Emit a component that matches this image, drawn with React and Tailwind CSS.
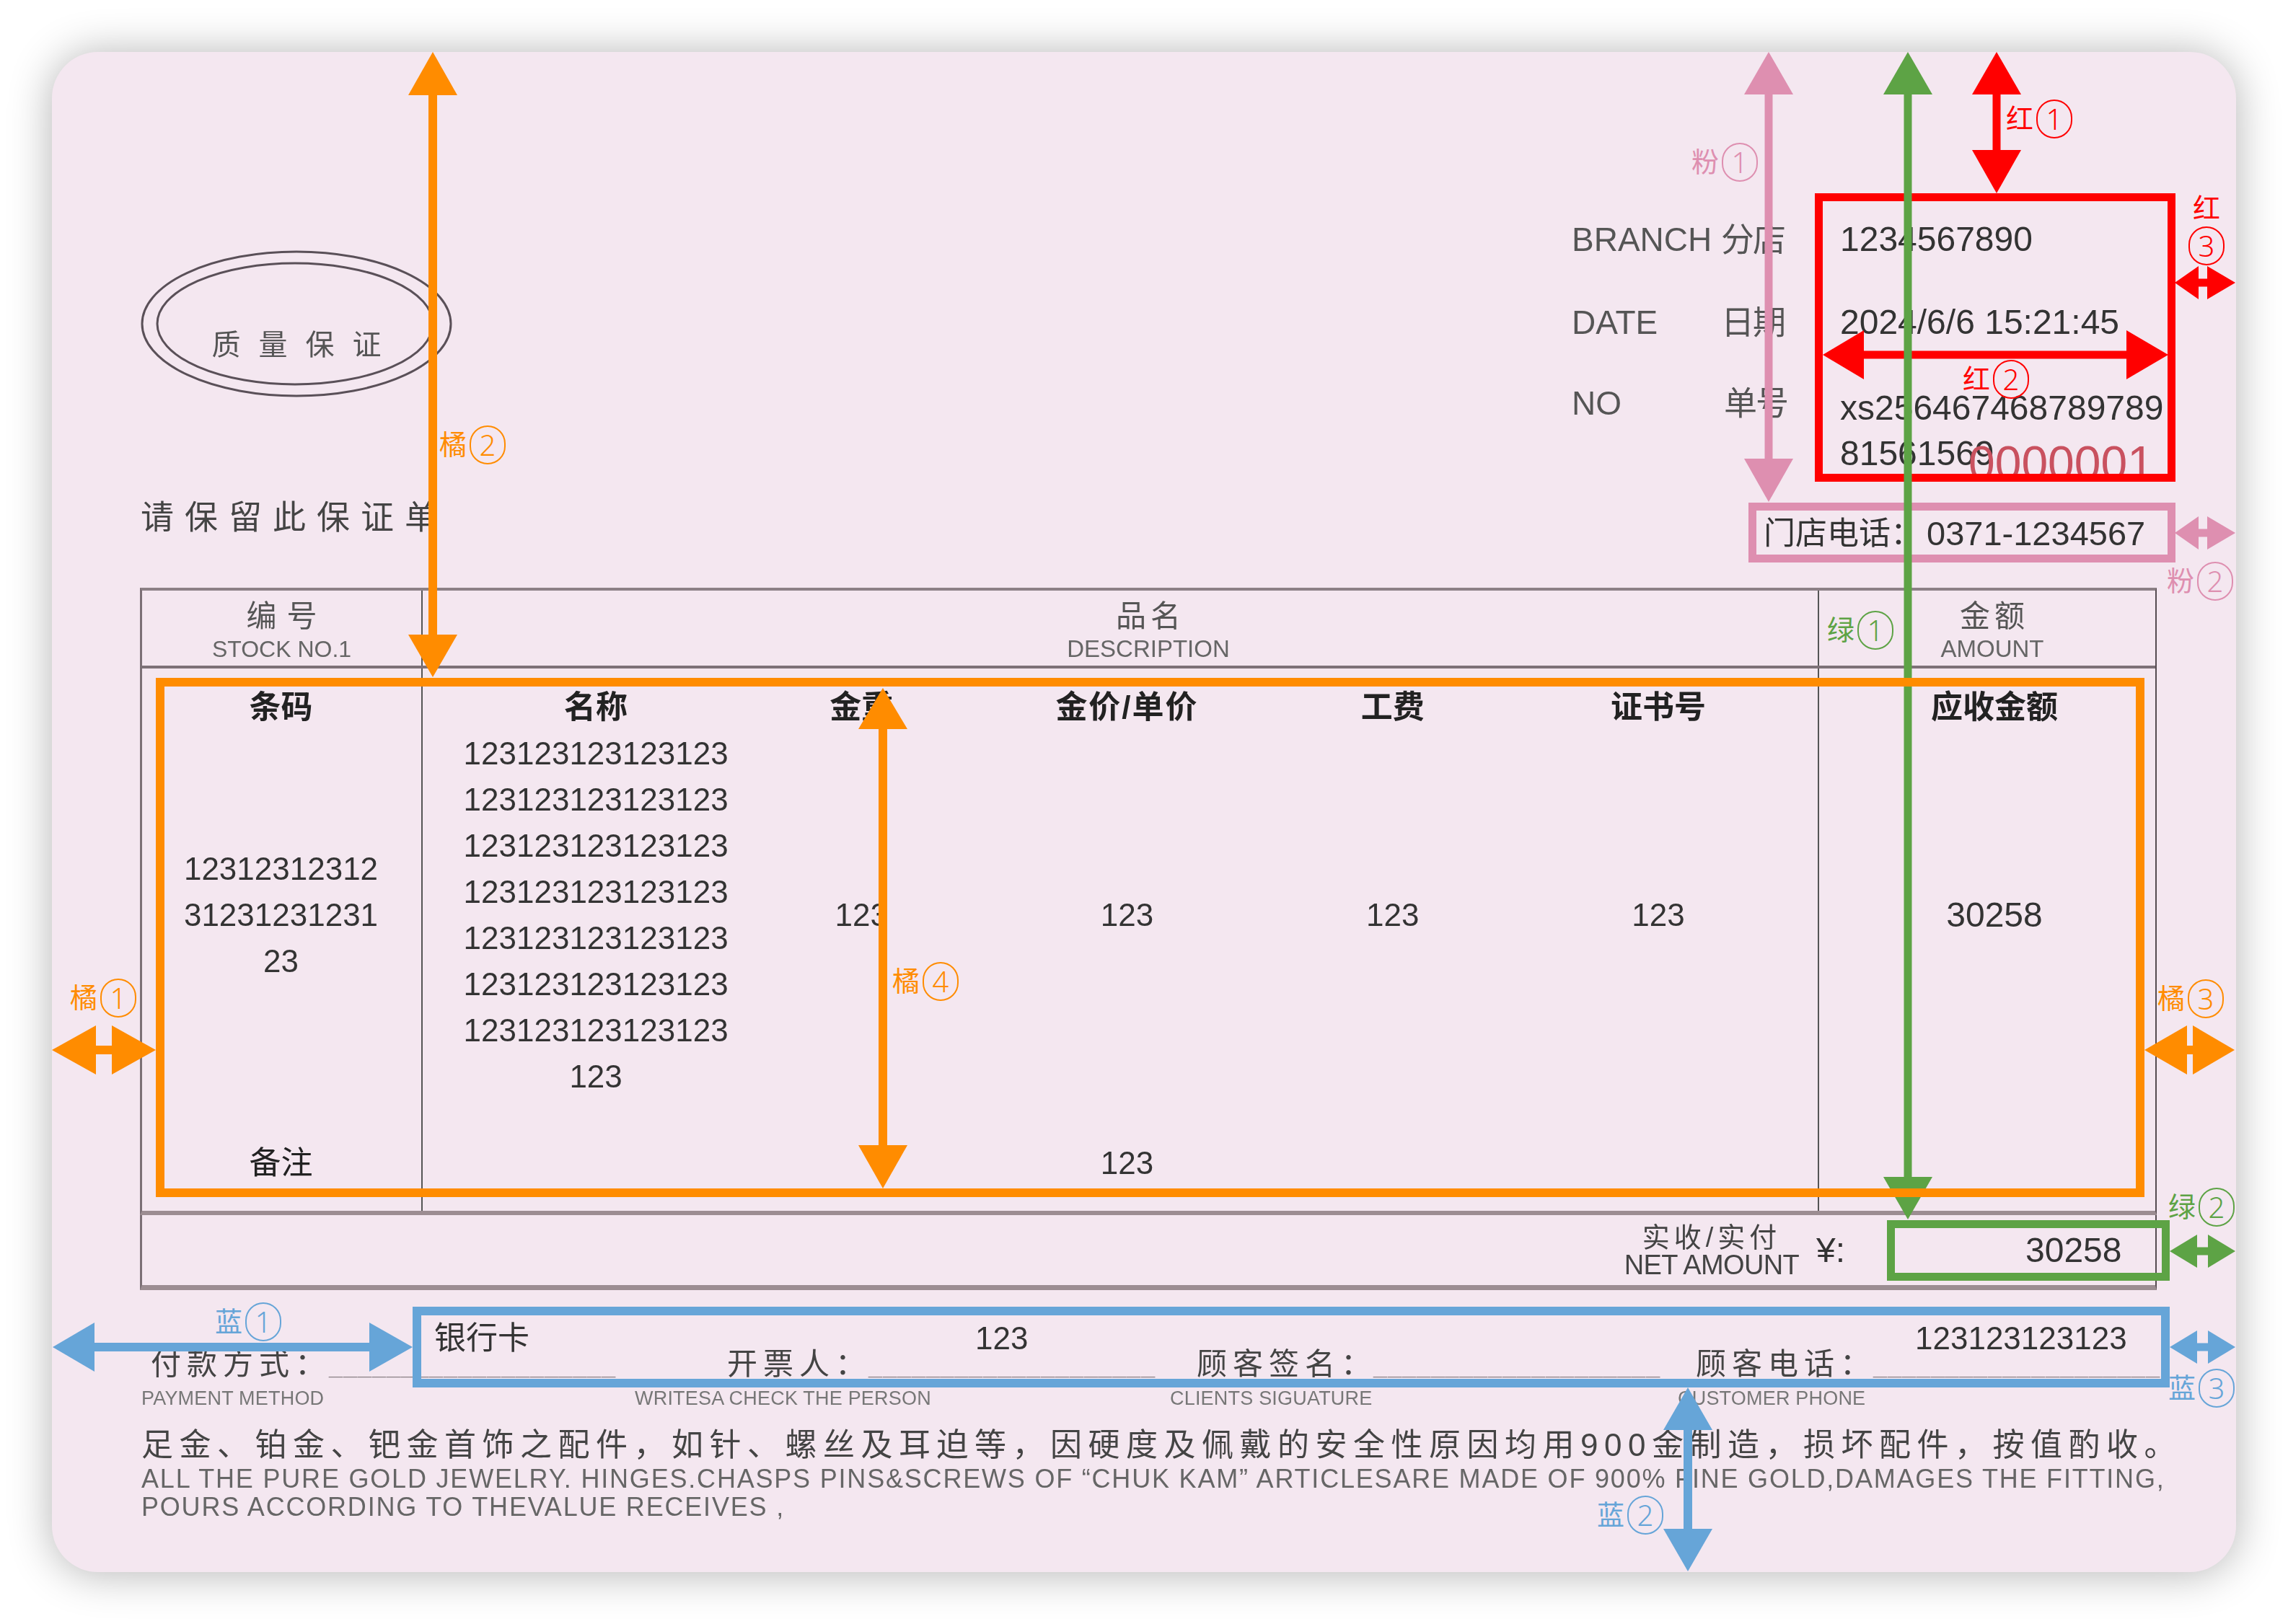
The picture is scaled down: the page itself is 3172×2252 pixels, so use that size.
import React from 'react';

const ORANGE = '#ff8c00';
const RED = '#ff0000';
const PINK = '#de8fb0';
const GREEN = '#5da345';
const BLUE = '#66a5d8';

const names = Array(7).fill('123123123123123');
const underscores = '____________________';

// up/down arrow, heads are filled triangles
const VArrow = ({ x, y1, y2, base1, base2, half = 34, w = 11, color }) => (
  <g fill={color}>
    <rect x={x - w / 2} y={base1} width={w} height={base2 - base1} />
    <polygon points={`${x},${y1} ${x - half},${base1} ${x + half},${base1}`} />
    <polygon points={`${x},${y2} ${x - half},${base2} ${x + half},${base2}`} />
  </g>
);

const HArrow = ({ y, x1, x2, base1, base2, half = 34, w = 11, color }) => (
  <g fill={color}>
    <rect x={base1} y={y - w / 2} width={base2 - base1} height={w} />
    <polygon points={`${x1},${y} ${base1},${y - half} ${base1},${y + half}`} />
    <polygon points={`${x2},${y} ${base2},${y - half} ${base2},${y + half}`} />
  </g>
);

const Box = ({ x1, y1, x2, y2, w, color }) => (
  <rect x={x1 + w / 2} y={y1 + w / 2} width={x2 - x1 - w} height={y2 - y1 - w} fill="none" stroke={color} strokeWidth={w} />
);

const Tag = ({ char, num, className }) => (
  <div className={`absolute flex items-center gap-[4px] h-[54px] text-[38px] leading-none ${className}`}>
    <span>{char}</span>
    <span className="flex items-center justify-center w-[50px] h-[54px] rounded-full border-[2.5px] border-current text-[40px] font-light [font-family:'Noto_Sans',sans-serif]">{num}</span>
  </div>
);

const Row = ({ children, className = '' }) => (
  <div className={`grid grid-cols-5 text-center ${className}`}>{children}</div>
);

const Blank = ({ className }) => (
  <span className={`pt-[2px] text-[34px] font-bold tracking-[1px] text-[#8a8086] ${className}`}>{underscores}</span>
);

const App = () => {
  return (
    <div className="relative w-[3172px] h-[2252px] bg-white p-[72px] overflow-hidden [font-family:'Liberation_Sans','Noto_Sans_CJK_SC',sans-serif] text-[#333]">
      <div className="w-[3028px] h-[2108px] rounded-[64px] bg-[#f4e7f0] shadow-[0_2px_60px_rgba(0,0,0,0.3)] overflow-hidden">
        <div className="blur-[0.7px]">
          {/* top block */}
          <div className="flex justify-between h-[743px] pl-[123px] pr-[84px]">
            <div className="pt-[275px]">
              <div className="relative w-[432px] h-[205px]">
                <svg width="432" height="205" viewBox="0 0 432 205" fill="none" stroke="#5a5058" strokeWidth="3">
                  <ellipse cx="216" cy="102" rx="214" ry="100" />
                  <ellipse cx="214" cy="102" rx="191" ry="84" />
                </svg>
                <div className="absolute inset-0 flex items-center justify-center pt-[56px] pl-[25px] text-[40px] tracking-[25px] text-[#555]">质量保证</div>
              </div>
              <div className="mt-[135px] text-[46px] leading-[60px] tracking-[15px] text-[#444] whitespace-nowrap">请保留此保证单</div>
            </div>

            <div className="relative w-[837px] pt-[230px]">
              <div className="grid grid-cols-[207px_165px_1fr] text-[46px] leading-[60px] text-[#555]">
                <div className="h-[115px]">BRANCH</div>
                <div className="tracking-[-2px]">分店</div>
                <div className="text-[48px] text-[#333]">1234567890</div>
                <div className="h-[117px]">DATE</div>
                <div className="tracking-[-2px]">日期</div>
                <div className="text-[48px] text-[#333] whitespace-nowrap">2024/6/6 15:21:45</div>
                <div className="leading-[50px]">NO</div>
                <div className="leading-[50px] pl-[4px] tracking-[-2px]">单号</div>
                <div className="text-[48px] text-[#333] leading-[63px]">
                  <div className="whitespace-nowrap">xs256467468789789</div>
                  <div>81561569</div>
                </div>
              </div>
              <div className="absolute left-[550px] top-[540px] text-[66px] leading-[60px] text-[#c9515f]">0000001</div>
              <div className="flex mt-[50px] pl-[266px] text-[47px] leading-[60px] text-[#333]">
                <span className="w-[226px] text-[44px]">门店电话：</span>
                <span className="whitespace-nowrap">0371-1234567</span>
              </div>
            </div>
          </div>

          {/* table */}
          <div className="ml-[122px] w-[2796px] border-t-[4px] border-l-[3px] border-r-[2px] border-b-[6px] border-t-[#8c8086] border-l-[#7b6f75] border-r-[#554b50] border-b-[#9c8d92]">
            <div className="grid grid-cols-[389px_1936px_1fr] h-[108px] border-b-[4px] border-[#7d7177] text-[#555]">
              <div className="flex flex-col items-center pt-[14px] border-r-2 border-[#555]">
                <div className="text-[42px] leading-[44px] tracking-[14px] pl-[14px]">编号</div>
                <div className="mt-[5px] text-[32px] leading-[36px] text-[#666]">STOCK NO.1</div>
              </div>
              <div className="flex flex-col items-center pt-[14px] pl-[78px] border-r-2 border-[#555]">
                <div className="text-[42px] leading-[44px] tracking-[6px] pl-[6px]">品名</div>
                <div className="mt-[5px] text-[33px] leading-[36px] text-[#666]">DESCRIPTION</div>
              </div>
              <div className="flex flex-col items-center pt-[14px] pl-[14px]">
                <div className="text-[42px] leading-[44px] tracking-[6px] pl-[6px]">金额</div>
                <div className="mt-[5px] text-[33px] leading-[36px] text-[#666]">AMOUNT</div>
              </div>
            </div>

            <div className="grid grid-cols-[389px_1936px_1fr] h-[752px] text-[44px] leading-[64px] text-[#333]">
              <div className="flex flex-col items-center pt-[22px] pr-[2px] border-r-2 border-[#555]">
                <div className="font-bold text-[#222]">条码</div>
                <div className="flex flex-col items-center justify-center h-[512px]">
                  <div>12312312312</div>
                  <div>31231231231</div>
                  <div>23</div>
                </div>
                <div className="mt-[56px] text-[#222]">备注</div>
              </div>
              <div className="pt-[22px] pl-[56px] pr-[37px] border-r-2 border-[#555]">
                <Row className="font-bold text-[#222]">
                  <div>名称</div>
                  <div>金重</div>
                  <div className="tracking-[2px]">金价/单价</div>
                  <div>工费</div>
                  <div>证书号</div>
                </Row>
                <Row className="h-[512px] items-center">
                  <div>
                    {names.map((n, i) => <div key={i}>{n}</div>)}
                    <div>123</div>
                  </div>
                  <div>123</div>
                  <div>123</div>
                  <div>123</div>
                  <div>123</div>
                </Row>
                <Row className="mt-[56px]">
                  <div />
                  <div />
                  <div>123</div>
                </Row>
              </div>
              <div className="flex flex-col items-center pt-[22px] pl-[20px]">
                <div className="font-bold text-[#222]">应收金额</div>
                <div className="flex items-center h-[512px] text-[48px]">30258</div>
              </div>
            </div>
          </div>
          <div className="ml-[122px] w-[2796px] h-[104px] flex items-center border-l-[3px] border-r-[2px] border-b-[7px] border-l-[#7b6f75] border-r-[#554b50] border-b-[#9c8d92]">
            <div className="ml-[2053px] w-[246px] text-center text-[#444]">
              <div className="text-[38px] leading-[40px] tracking-[6px] whitespace-nowrap">实收/实付</div>
              <div className="text-[38px] leading-[36px] tracking-[-0.6px] whitespace-nowrap">NET AMOUNT</div>
            </div>
            <div className="ml-[22px] w-[290px] text-[48px] leading-[60px]">¥:</div>
            <div className="text-[48px] leading-[60px]">30258</div>
          </div>

          {/* payment lines */}
          <div className="flex mt-[45px] pl-[530px] text-[44px] leading-[44px] text-[#333]">
            <span className="w-[750px]">银行卡</span>
            <span className="w-[1303px]">123</span>
            <span>123123123123</span>
          </div>
          <div className="flex h-[44px] mt-[-8px] pl-[137px] text-[42px] leading-[44px] tracking-[8px] text-[#444] whitespace-nowrap">
            <span className="w-[247px]">付款方式：</span>
            <Blank className="w-[396px]" />
            <span className="ml-[156px] w-[196px]">开票人：</span>
            <Blank className="w-[394px]" />
            <span className="ml-[61px] w-[245px]">顾客签名：</span>
            <Blank className="w-[396px]" />
            <span className="ml-[51px] w-[246px]">顾客电话：</span>
            <Blank className="w-[397px]" />
          </div>
          <div className="flex mt-[10px] pl-[124px] text-[27px] leading-[30px] tracking-[0.2px] text-[#777] whitespace-nowrap">
            <span className="w-[684px]">PAYMENT METHOD</span>
            <span className="w-[742px]">WRITESA CHECK THE PERSON</span>
            <span className="w-[704px]">CLIENTS SIGUATURE</span>
            <span>CUSTOMER PHONE</span>
          </div>

          {/* small print */}
          <div className="mt-[23px] pl-[124px] text-[#444] whitespace-nowrap">
            <div className="text-[44px] leading-[54px] tracking-[8.5px]">足金、铂金、钯金首饰之配件，如针、螺丝及耳迫等，因硬度及佩戴的安全性原因均用900金制造，损坏配件，按值酌收。</div>
            <div className="text-[36px] leading-[39px] tracking-[1.8px] text-[#666]">ALL THE PURE GOLD JEWELRY. HINGES.CHASPS PINS&amp;SCREWS OF “CHUK KAM” ARTICLESARE MADE OF 900% FINE GOLD,DAMAGES THE FITTING,</div>
            <div className="text-[36px] leading-[39px] tracking-[1.8px] text-[#666]">POURS ACCORDING  TO THEVALUE RECEIVES ,</div>
          </div>
        </div>
      </div>

      {/* measurement marks on top of the receipt */}
      <svg className="absolute inset-0" width="3172" height="2252" viewBox="0 0 3172 2252">
        <Box x1={2516} y1={268} x2={3016} y2={668} w={11} color={RED} />
        <VArrow x={2768} y1={72} y2={268} base1={131} base2={208} color={RED} />
        <HArrow y={492} x1={2527} x2={3006} base1={2584} base2={2948} color={RED} />
        <HArrow y={392} x1={3015} x2={3099} base1={3048} base2={3060} half={23} color={RED} />

        <Box x1={2424} y1={697} x2={3016} y2={780} w={11} color={PINK} />
        <VArrow x={2452} y1={72} y2={696} base1={131} base2={636} color={PINK} />
        <HArrow y={739} x1={3015} x2={3099} base1={3048} base2={3060} half={23} color={PINK} />

        <VArrow x={2645} y1={72} y2={1691} base1={131} base2={1632} color={GREEN} />
        <Box x1={2616} y1={1692} x2={3008} y2={1776} w={11} color={GREEN} />
        <HArrow y={1735} x1={3008} x2={3099} base1={3046} base2={3061} half={23} color={GREEN} />

        <Box x1={216} y1={940} x2={2973} y2={1660} w={12} color={ORANGE} />
        <VArrow x={600} y1={72} y2={939} base1={132} base2={880} w={12} color={ORANGE} />
        <VArrow x={1224} y1={954} y2={1648} base1={1011} base2={1588} w={12} color={ORANGE} />
        <HArrow y={1456} x1={72} x2={216} base1={133} base2={155} w={12} color={ORANGE} />
        <HArrow y={1456} x1={2973} x2={3098} base1={3032} base2={3040} w={12} color={ORANGE} />

        <Box x1={572} y1={1812} x2={3008} y2={1924} w={12} color={BLUE} />
        <HArrow y={1868} x1={73} x2={572} base1={131} base2={512} w={12} color={BLUE} />
        <VArrow x={2340} y1={1924} y2={2179} base1={1983} base2={2120} w={12} color={BLUE} />
        <HArrow y={1868} x1={3008} x2={3099} base1={3046} base2={3061} half={23} color={BLUE} />
      </svg>

      <Tag char="橘" num="1" className="left-[97px] top-[1357px] text-[#ff8c00]" />
      <Tag char="橘" num="2" className="left-[609px] top-[590px] text-[#ff8c00]" />
      <Tag char="橘" num="3" className="left-[2991px] top-[1358px] text-[#ff8c00]" />
      <Tag char="橘" num="4" className="left-[1237px] top-[1334px] text-[#ff8c00]" />
      <Tag char="红" num="1" className="left-[2781px] top-[138px] text-[#ff0000]" />
      <Tag char="红" num="2" className="left-[2721px] top-[499px] text-[#ff0000]" />
      <div className="absolute left-[3034px] top-[270px] flex flex-col items-center text-[38px] leading-none text-[#ff0000]">
        <span>红</span>
        <span className="flex items-center justify-center mt-[6px] w-[50px] h-[54px] rounded-full border-[2.5px] border-current text-[40px] font-light [font-family:'Noto_Sans',sans-serif]">3</span>
      </div>
      <Tag char="粉" num="1" className="left-[2345px] top-[198px] text-[#de8fb0]" />
      <Tag char="粉" num="2" className="left-[3004px] top-[779px] text-[#de8fb0]" />
      <Tag char="绿" num="1" className="left-[2533px] top-[847px] text-[#5da345]" />
      <Tag char="绿" num="2" className="left-[3006px] top-[1647px] text-[#5da345]" />
      <Tag char="蓝" num="1" className="left-[298px] top-[1806px] text-[#66a5d8]" />
      <Tag char="蓝" num="2" className="left-[2214px] top-[2074px] text-[#66a5d8]" />
      <Tag char="蓝" num="3" className="left-[3006px] top-[1898px] text-[#66a5d8]" />
    </div>
  );
};

export default App;
